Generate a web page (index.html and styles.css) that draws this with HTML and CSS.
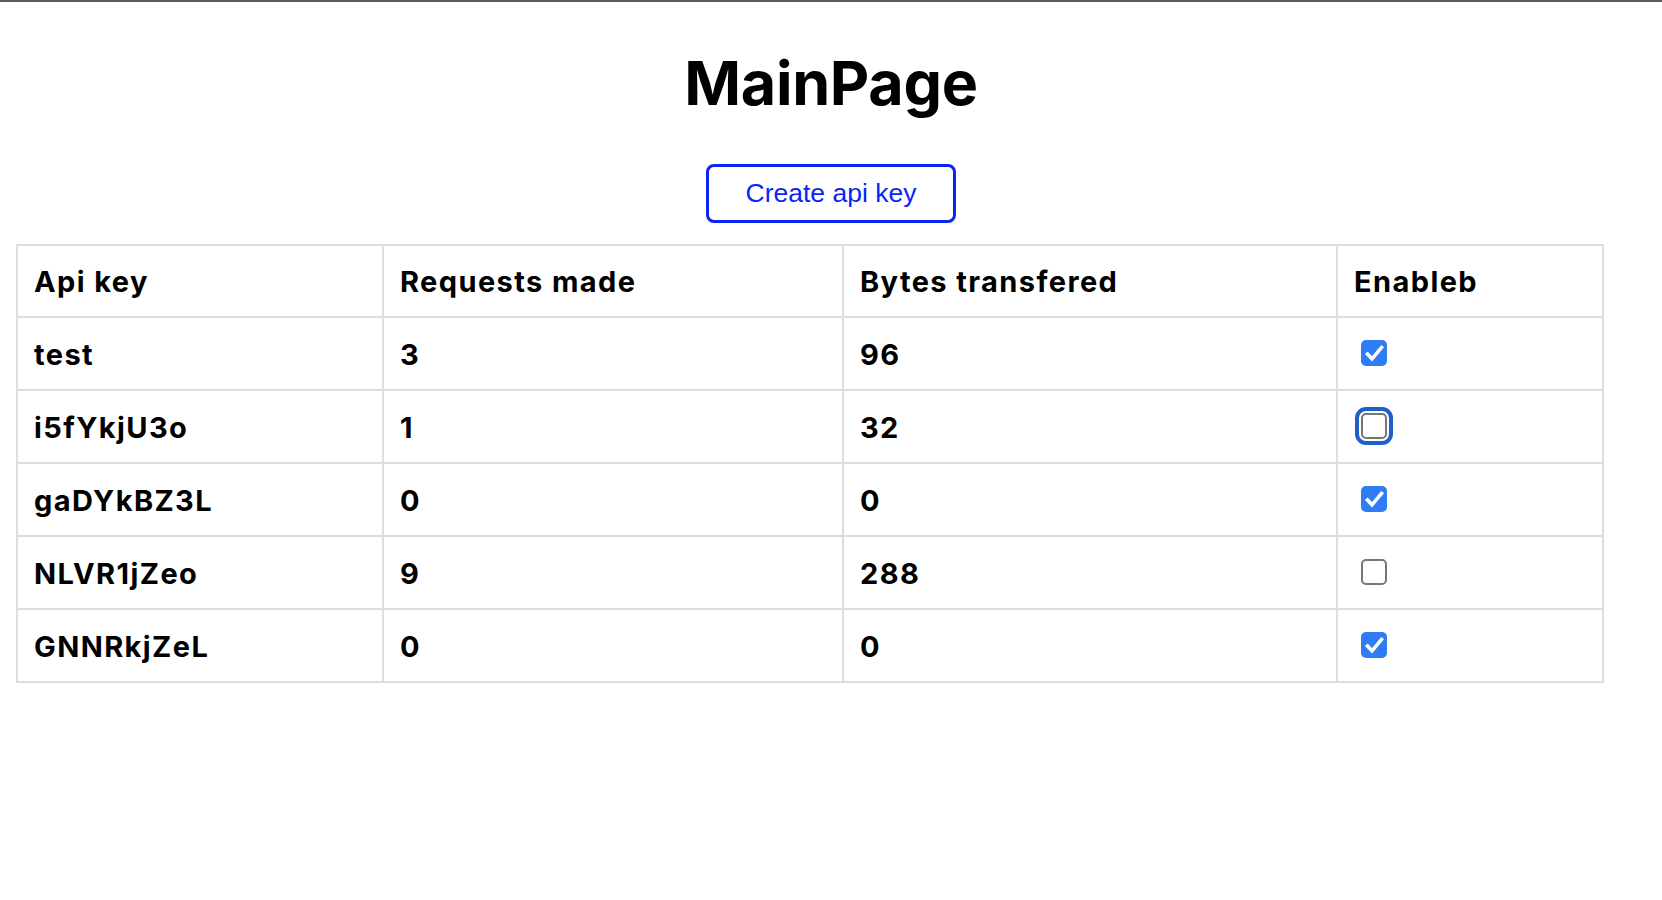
FILE: index.html
```html
<!DOCTYPE html>
<html lang="en">
<head>
<meta charset="utf-8">
<title>MainPage</title>
<link rel="stylesheet" href="styles.css">
</head>
<body>
<div class="topline"></div>
<header class="header">
  <h1 class="title">MainPage</h1>
  <button class="create-btn" type="button">Create api key</button>
</header>
<table class="keys">
  <colgroup>
    <col class="c1"><col class="c2"><col class="c3"><col class="c4">
  </colgroup>
  <thead>
    <tr><th>Api key</th><th>Requests made</th><th>Bytes transfered</th><th>Enableb</th></tr>
  </thead>
  <tbody>
    <tr><td>test</td><td>3</td><td>96</td><td class="en"><span class="check on"><svg viewBox="0 0 26 26" width="26" height="26"><polyline points="6.5,14 11,18.8 20.5,7.5" fill="none" stroke="#fff" stroke-width="3.6" stroke-linecap="square"/></svg></span></td></tr>
    <tr><td>i5fYkjU3o</td><td>1</td><td>32</td><td class="en"><span class="check off focus"></span></td></tr>
    <tr><td>gaDYkBZ3L</td><td>0</td><td>0</td><td class="en"><span class="check on"><svg viewBox="0 0 26 26" width="26" height="26"><polyline points="6.5,14 11,18.8 20.5,7.5" fill="none" stroke="#fff" stroke-width="3.6" stroke-linecap="square"/></svg></span></td></tr>
    <tr><td>NLVR1jZeo</td><td>9</td><td>288</td><td class="en"><span class="check off"></span></td></tr>
    <tr><td>GNNRkjZeL</td><td>0</td><td>0</td><td class="en"><span class="check on"><svg viewBox="0 0 26 26" width="26" height="26"><polyline points="6.5,14 11,18.8 20.5,7.5" fill="none" stroke="#fff" stroke-width="3.6" stroke-linecap="square"/></svg></span></td></tr>
  </tbody>
</table>
</body>
</html>
```
FILE: styles.css
```css
html, body {
  margin: 0;
  padding: 0;
  background: #ffffff;
}
body {
  font-family: Inter, "Noto Sans", sans-serif;
  color: #000;
}
.topline {
  height: 2px;
  background: #5b5b5b;
}
.header {
  display: flex;
  flex-direction: column;
  align-items: center;
  padding-top: 42px;
}
.title {
  margin: 0;
  font-size: 61px;
  line-height: 78px;
  font-weight: 700;
  letter-spacing: -0.3px;
}
.create-btn {
  margin-top: 42px;
  width: 250px;
  height: 59px;
  box-sizing: border-box;
  border: 3px solid #0a24f5;
  border-radius: 8px;
  background: #fff;
  color: #0a24f5;
  font-family: "Liberation Sans", Arial, sans-serif;
  font-size: 26.5px;
  padding: 0;
}
.keys {
  margin: 21px 0 0 16px;
  width: 1586px;
  border-collapse: collapse;
  table-layout: fixed;
}
.c1 { width: 366px; }
.c2 { width: 460px; }
.c3 { width: 494px; }
.c4 { width: 266px; }
.keys th, .keys td {
  border: 2px solid #dddddd;
  padding: 22px 16px 20px;
  font-size: 29px;
  line-height: 29px;
  font-weight: 700;
  letter-spacing: 1.4px;
  text-align: left;
  vertical-align: middle;
}
.keys th {
  padding-top: 21px;
  padding-bottom: 20px;
}
.keys td.en {
  padding: 20px 16px 22px 23px;
}
.check {
  display: block;
  width: 26px;
  height: 26px;
  box-sizing: border-box;
  border-radius: 5px;
}
.check svg {
  display: block;
}
.check.on {
  background: #2f7cf6;
}
.check.off {
  border: 2px solid #777777;
  background: #fff;
}
.check.focus {
  outline: 4px solid #1f5fcb;
  outline-offset: 2px;
}
```
